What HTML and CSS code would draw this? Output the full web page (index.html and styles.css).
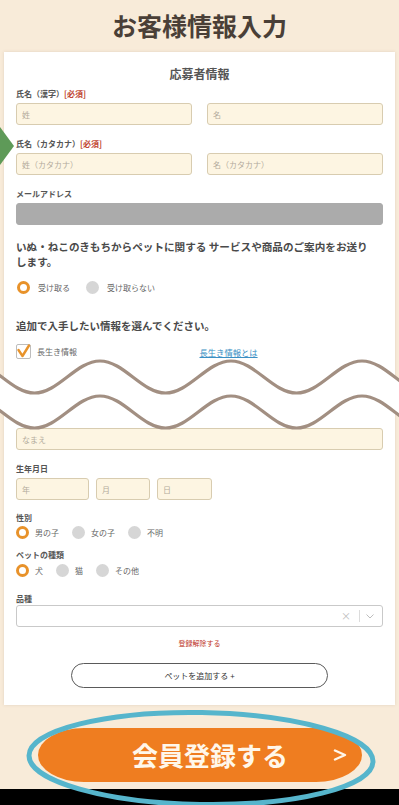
FILE: index.html
```html
<!DOCTYPE html>
<html lang="ja">
<head>
<meta charset="utf-8">
<title>お客様情報入力</title>
<link rel="stylesheet" href="styles.css">
</head>
<body>
<div class="page">
  <header class="top"><h1 class="title">お客様情報入力</h1></header>

  <main class="card">
    <h2 class="card-title">応募者情報</h2>

    <div class="field first">
      <div class="label">氏名（漢字）<span class="req">[必須]</span></div>
      <div class="row2">
        <input class="inp" placeholder="姓">
        <input class="inp" placeholder="名">
      </div>
    </div>

    <div class="field">
      <div class="label">氏名（カタカナ）<span class="req">[必須]</span></div>
      <div class="row2">
        <input class="inp" placeholder="姓（カタカナ）">
        <input class="inp" placeholder="名（カタカナ）">
      </div>
    </div>

    <div class="field">
      <div class="label">メールアドレス</div>
      <input class="inp gray">
    </div>

    <p class="notice">いぬ・ねこのきもちからペットに関する サービスや商品のご案内をお送りします。</p>

    <div class="radios wide">
      <label class="radio"><span class="dot on"></span>受け取る</label>
      <label class="radio"><span class="dot"></span>受け取らない</label>
    </div>

    <p class="sub">追加で入手したい情報を選んでください。</p>

    <div class="checks">
      <label class="check">
        <span class="box"><svg class="tick" viewBox="0 0 15 15" width="15" height="15"><polyline points="2.5,6 6.5,12 13,1.5" fill="none" stroke="#e8932b" stroke-width="2.4" stroke-linecap="round" stroke-linejoin="round"/></svg></span>
        長生き情報
      </label>
      <a class="link" href="#">長生き情報とは</a>
    </div>

    <p class="pet-head">ペット情報</p>

    <div class="field name">
      <div class="label">お名前</div>
      <input class="inp" placeholder="なまえ">
    </div>

    <div class="field">
      <div class="label">生年月日</div>
      <div class="dates">
        <input class="inp y" placeholder="年">
        <input class="inp m" placeholder="月">
        <input class="inp d" placeholder="日">
      </div>
    </div>

    <div class="field sex">
      <div class="label">性別</div>
      <div class="radios">
        <label class="radio"><span class="dot on"></span>男の子</label>
        <label class="radio"><span class="dot"></span>女の子</label>
        <label class="radio"><span class="dot"></span>不明</label>
      </div>
    </div>

    <div class="field kind">
      <div class="label">ペットの種類</div>
      <div class="radios">
        <label class="radio"><span class="dot on"></span>犬</label>
        <label class="radio"><span class="dot"></span>猫</label>
        <label class="radio"><span class="dot"></span>その他</label>
      </div>
    </div>

    <div class="field breed">
      <div class="label">品種</div>
      <div class="select">
        <span class="clear">×</span>
        <span class="sep"></span>
        <svg class="chev" viewBox="0 0 8 5" width="8" height="5"><polyline points="0.5,0.5 4,4 7.5,0.5" fill="none" stroke="#bdbdbd" stroke-width="1"/></svg>
      </div>
    </div>

    <p class="remove">登録解除する</p>

    <button class="add">ペットを追加する +</button>
  </main>

  <section class="cta">
    <button class="cta-btn">
      <span class="cta-text">会員登録する</span>
      <svg class="cta-arrow" viewBox="0 0 14 12" width="14" height="12"><polyline points="2,1.5 12,6 2,10.5" fill="none" stroke="#fff7ea" stroke-width="2.4" stroke-linecap="round" stroke-linejoin="round"/></svg>
    </button>
    <div class="bar"></div>
    <svg class="ring" viewBox="0 0 399 100" width="399" height="100">
      <ellipse cx="201" cy="50.5" rx="172" ry="46" fill="none" stroke="#56b5cc" stroke-width="5" transform="rotate(1 201 50.5)"/>
    </svg>
  </section>

  <span class="marker"></span>

  <svg class="wave" viewBox="0 0 399 80" width="399" height="80">
    <path fill="#fff" d="M-31 6 C-7.14 6 10.64 38 34.5 38 C58.36 38 76.14 6 100 6 C123.86 6 141.64 38 165.5 38 C189.36 38 207.14 6 231 6 C254.86 6 272.64 38 296.5 38 C320.36 38 338.14 6 362 6 C385.86 6 403.64 38 427.5 38 L427.5 73 C403.64 73 385.86 41 362 41 C338.14 41 320.36 73 296.5 73 C272.64 73 254.86 41 231 41 C207.14 41 189.36 73 165.5 73 C141.64 73 123.86 41 100 41 C76.14 41 58.36 73 34.5 73 C10.64 73 -7.14 41 -31 41 Z"/>
    <path fill="none" stroke="#a28f82" stroke-width="3.2" d="M-31 6 C-7.14 6 10.64 38 34.5 38 S76.14 6 100 6 S141.64 38 165.5 38 S207.14 6 231 6 S272.64 38 296.5 38 S338.14 6 362 6 S403.64 38 427.5 38"/>
    <path fill="none" stroke="#a28f82" stroke-width="3.2" d="M-31 41 C-7.14 41 10.64 73 34.5 73 S76.14 41 100 41 S141.64 73 165.5 73 S207.14 41 231 41 S272.64 73 296.5 73 S338.14 41 362 41 S403.64 73 427.5 73"/>
  </svg>
</div>
</body>
</html>
```

FILE: styles.css
```css
* { box-sizing: border-box; margin: 0; padding: 0; }

html, body { overflow: hidden; }

body {
  background: #f8ebd9;
  font-family: "Noto Sans CJK JP", "Noto Sans", sans-serif;
  color: #4d4d4d;
  width: 399px;
  height: 805px;
}

.page {
  position: relative;
  width: 399px;
  height: 805px;
}

.top {
  height: 52px;
  display: flex;
  align-items: center;
  justify-content: center;
  padding-bottom: 2px;
}

.title {
  font-size: 25px;
  line-height: 1;
  font-weight: 700;
  color: #4a3f37;
}

.card {
  margin: 0 4px;
  background: #fff;
  padding: 14px 12px 17px;
  box-shadow: 0 0 3px rgba(120, 100, 80, 0.18);
  display: flex;
  flex-direction: column;
}

.card-title {
  font-size: 12px;
  line-height: 16px;
  text-align: center;
  font-weight: 700;
  color: #555;
}

.field { margin-top: 13px; display: flex; flex-direction: column; }
.field.first { margin-top: 6px; }

.label {
  font-size: 8px;
  line-height: 12px;
  font-weight: 700;
  color: #555;
  margin-bottom: 3px;
}

.req { color: #c0432f; }

.row2 {
  display: grid;
  grid-template-columns: 1fr 1fr;
  gap: 15px;
}

.inp {
  display: block;
  width: 100%;
  height: 22px;
  border: 1px solid #d8ccb0;
  background: #fdf5e2;
  border-radius: 3px;
  padding: 0 5px;
  font-family: "Noto Sans CJK JP", "Noto Sans", sans-serif;
  font-size: 8px;
  color: #555;
  outline: none;
}

.inp::placeholder { color: #b3ab9c; }

.inp.gray {
  background: #ababab;
  border-color: #ababab;
}

.notice {
  margin-top: 14px;
  font-size: 10.6px;
  line-height: 15px;
  font-weight: 700;
  color: #4a4a4a;
  padding-right: 8px;
}

.radios {
  display: flex;
  align-items: center;
  height: 14px;
  gap: 13px;
}

.radios.wide {
  margin-top: 11px;
  gap: 16px;
  padding-left: 1px;
}

.radio {
  display: flex;
  align-items: center;
  gap: 6px;
  font-size: 8px;
  color: #666;
}

.radios.wide .radio { gap: 8px; }

.dot {
  width: 13px;
  height: 13px;
  border-radius: 50%;
  background: #d6d6d6;
}

.dot.on {
  background: #fff;
  border: 3px solid #e8922a;
}

.sub {
  margin-top: 24px;
  font-size: 10.5px;
  line-height: 15px;
  font-weight: 700;
  color: #4a4a4a;
}

.checks {
  margin-top: 11px;
  display: grid;
  grid-template-columns: 1fr 1fr;
  align-items: center;
  height: 15px;
}

.check {
  display: flex;
  align-items: center;
  gap: 6px;
  font-size: 8px;
  color: #666;
}

.box {
  width: 15px;
  height: 15px;
  border: 1px solid #bdbdbd;
  border-radius: 2px;
  background: #fff;
  position: relative;
}

.tick {
  position: absolute;
  left: -1px;
  top: -1px;
}

.link {
  font-size: 8.3px;
  color: #3b8fc4;
  text-decoration: underline;
}

.pet-head {
  margin-top: 28px;
  font-size: 10.5px;
  line-height: 15px;
  font-weight: 700;
  color: #4a4a4a;
}

.field.name { margin-top: 11px; }

.dates { display: flex; gap: 7px; }
.inp.y { width: 73px; }
.inp.m { width: 54px; }
.inp.d { width: 55px; }

.field.sex { margin-top: 12px; }
.field.sex .label { margin-bottom: 1px; }

.field.kind { margin-top: 10px; }
.field.kind .label { margin-bottom: 2px; }

.field.breed { margin-top: 16px; }
.field.breed .label { margin-bottom: 0; }

.select {
  height: 22px;
  border: 1px solid #c9c9c9;
  border-radius: 3px;
  background: #fff;
  display: flex;
  align-items: center;
  justify-content: flex-end;
  padding-right: 8px;
}

.clear {
  font-size: 10px;
  line-height: 1;
  color: #bdbdbd;
}

.sep {
  width: 1px;
  height: 12px;
  background: #dcdcdc;
  margin: 0 6px 0 8px;
}

.remove {
  margin-top: 11px;
  font-size: 7px;
  line-height: 10px;
  text-align: center;
  color: #c0392b;
}

.add {
  margin-top: 15px;
  align-self: center;
  width: 257px;
  height: 25px;
  border: 1px solid #5a5a5a;
  border-radius: 13px;
  background: #fff;
  font-family: "Noto Sans CJK JP", "Noto Sans", sans-serif;
  font-size: 8px;
  color: #333;
}

.cta {
  position: relative;
  margin-top: 23px;
}

.cta-btn {
  margin-left: 38px;
  width: 324px;
  height: 54px;
  border: none;
  background: #ef7d20;
  border-radius: 46px / 27px;
  display: grid;
  grid-template-columns: 1fr auto 1fr;
  align-items: center;
  padding-left: 20px;
  font-family: "Noto Sans CJK JP", "Noto Sans", sans-serif;
  color: #fff7ea;
}

.cta-text {
  grid-column: 2;
  font-size: 26px;
  line-height: 1;
  font-weight: 700;
}

.cta-arrow {
  grid-column: 3;
  justify-self: end;
  margin-right: 15px;
}

.bar {
  margin-top: 7px;
  height: 22px;
  background: #000;
}

.ring {
  position: absolute;
  left: 0;
  top: -20px;
  z-index: 2;
}

.marker {
  position: absolute;
  left: 0;
  top: 127px;
  width: 0;
  height: 0;
  border-left: 14px solid #5e9a58;
  border-top: 19px solid transparent;
  border-bottom: 19px solid transparent;
  z-index: 3;
}

.wave {
  position: absolute;
  left: 0;
  top: 355px;
  z-index: 3;
  overflow: visible;
}
```
